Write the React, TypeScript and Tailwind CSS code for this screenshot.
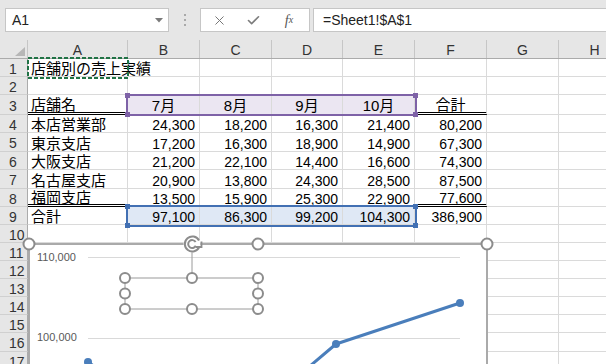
import { X, Check } from "lucide-react";

type Cell = { t?: string; a?: "l" | "r" | "c"; x?: string };
type Row = { n: number; h: string; cells: Cell[] };

const colW = ["w-[100px]", "w-[72px]", "w-[72px]", "w-[71px]", "w-[72px]", "w-[72px]", "w-[72px]", "w-[72px]"];
const letters = ["A", "B", "C", "D", "E", "F", "G", "H"];

const DBL = "border-b-[3px] border-double border-b-black";
const PUR = "bg-[#ebe6f2]";
const BLU = "bg-[#dfe8f5]";

const nums = (name: string, v: string[], last = false): Cell[] => [
  { t: name, x: last ? DBL : "" },
  ...v.slice(0, 4).map((t) => ({ t, a: "r" as const })),
  { t: v[4], a: "r", x: last ? DBL : "" },
];

const rows: Row[] = [
  { n: 1, h: "h-[18px]", cells: [{ t: "店舗別の売上実績", x: "border-r-transparent" }] },
  { n: 2, h: "h-[18px]", cells: [] },
  {
    n: 3,
    h: "h-[20px]",
    cells: [
      { t: "店舗名", x: DBL },
      { t: "7月", a: "c", x: PUR },
      { t: "8月", a: "c", x: PUR },
      { t: "9月", a: "c", x: PUR },
      { t: "10月", a: "c", x: PUR },
      { t: "合計", a: "c", x: DBL },
    ],
  },
  { n: 4, h: "h-[18px]", cells: nums("本店営業部", ["24,300", "18,200", "16,300", "21,400", "80,200"]) },
  { n: 5, h: "h-[19px]", cells: nums("東京支店", ["17,200", "16,300", "18,900", "14,900", "67,300"]) },
  { n: 6, h: "h-[18px]", cells: nums("大阪支店", ["21,200", "22,100", "14,400", "16,600", "74,300"]) },
  { n: 7, h: "h-[19px]", cells: nums("名古屋支店", ["20,900", "13,800", "24,300", "28,500", "87,500"]) },
  { n: 8, h: "h-[18px]", cells: nums("福岡支店", ["13,500", "15,900", "25,300", "22,900", "77,600"], true) },
  {
    n: 9,
    h: "h-[18px]",
    cells: [
      { t: "合計" },
      { t: "97,100", a: "r", x: BLU },
      { t: "86,300", a: "r", x: BLU },
      { t: "99,200", a: "r", x: BLU },
      { t: "104,300", a: "r", x: BLU },
      { t: "386,900", a: "r" },
    ],
  },
  { n: 10, h: "h-[18px]", cells: [] },
  { n: 11, h: "h-[18px]", cells: [] },
  { n: 12, h: "h-[18px]", cells: [] },
  { n: 13, h: "h-[18px]", cells: [] },
  { n: 14, h: "h-[18px]", cells: [] },
  { n: 15, h: "h-[18px]", cells: [] },
  { n: 16, h: "h-[19px]", cells: [] },
  { n: 17, h: "h-[18px]", cells: [] },
];

function Handles({ color }: { color: string }) {
  return (
    <>
      <span className={`absolute -left-[3px] -top-[3px] h-[5px] w-[5px] ${color}`} />
      <span className={`absolute -right-[3px] -top-[3px] h-[5px] w-[5px] ${color}`} />
      <span className={`absolute -bottom-[3px] -left-[3px] h-[5px] w-[5px] ${color}`} />
      <span className={`absolute -bottom-[3px] -right-[3px] h-[5px] w-[5px] ${color}`} />
    </>
  );
}

function Chart() {
  const hs: [number, number][] = [
    [97, 35], [164, 35], [230, 35],
    [97, 50.5], [230, 50.5],
    [97, 66], [164, 66], [230, 66],
  ];
  return (
    <div className="absolute left-[28px] top-[243px] h-[130px] w-[460px] bg-white">
      <span className="absolute left-[9px] top-[8px] text-[11px] leading-[13px] text-[#595959]">110,000</span>
      <span className="absolute left-[9px] top-[88px] text-[11px] leading-[13px] text-[#595959]">100,000</span>
      <svg className="absolute left-0 top-0 overflow-visible" width="460" height="130" viewBox="0 0 460 130">
        <line x1="60" y1="14.5" x2="432" y2="14.5" stroke="#d9d9d9" strokeWidth="1" />
        <line x1="60" y1="95.5" x2="432" y2="95.5" stroke="#d9d9d9" strokeWidth="1" />
        <polyline points="60,119 184,206 308,101 432,60" fill="none" stroke="#4a7ebb" strokeWidth="3" strokeLinejoin="round" />
        {[[60, 119], [308, 101], [432, 60]].map(([x, y]) => (
          <circle key={x} cx={x} cy={y} r="4" fill="#4a7ebb" />
        ))}
        {/* chart frame */}
        <path d="M1 130 V1 H459 V130" fill="none" stroke="#8f8f8f" strokeWidth="1.5" />
        {/* title box */}
        <rect x="97" y="35" width="133" height="31" fill="none" stroke="#9a9a9a" strokeWidth="1" />
        <line x1="164" y1="9" x2="164" y2="35" stroke="#9a9a9a" strokeWidth="1" />
        {hs.map(([x, y]) => (
          <circle key={`${x}-${y}`} cx={x} cy={y} r="5" fill="white" stroke="#8c8c8c" strokeWidth="2" />
        ))}
        {[1, 230, 459].map((x) => (
          <circle key={x} cx={x} cy="1" r="5.5" fill="white" stroke="#8c8c8c" strokeWidth="2" />
        ))}
        {/* rotate handle */}
        <g transform="translate(164,1)" fill="none" stroke="#8c8c8c" strokeWidth="2">
          <circle r="8.5" fill="white" stroke="none" />
          <path d="M7 -3.5 A7.5 7.5 0 1 0 7.2 3" />
          <path d="M3.6 -2 A4 4 0 1 0 3.8 1.8" />
          <path d="M4 3 H9.5 V-2.5" strokeWidth="1.8" />
        </g>
      </svg>
    </div>
  );
}

export default function App() {
  return (
    <div className="relative h-[364px] w-[606px] overflow-hidden bg-white font-['Liberation_Sans','Noto_Sans_CJK_JP',sans-serif] text-black">
      {/* formula bar */}
      <div className="flex h-[40px] bg-[#e6e6e6] pl-[5px] pt-[8px]">
        <div className="flex h-[24px] w-[164px] shrink-0 items-center justify-between border border-[#c6c6c6] bg-white pl-[6px] pr-[5px] text-[14px] text-[#222]">
          <span>A1</span>
          <svg width="8" height="5" viewBox="0 0 8 5">
            <path d="M0 0 H8 L4 4.5 Z" fill="#7a7a7a" />
          </svg>
        </div>
        <div className="flex h-[24px] w-[31px] shrink-0 flex-col items-center justify-center gap-[3px]">
          <span className="h-[2px] w-[2px] bg-[#a9a9a9]" />
          <span className="h-[2px] w-[2px] bg-[#a9a9a9]" />
          <span className="h-[2px] w-[2px] bg-[#a9a9a9]" />
        </div>
        <div className="flex h-[24px] w-[110px] shrink-0 items-center border border-[#c6c6c6] bg-white">
          <span className="flex w-[37px] justify-center">
            <X size={15} strokeWidth={1.6} color="#777" />
          </span>
          <span className="flex w-[31px] justify-center">
            <Check size={15} strokeWidth={2.6} color="#7d7d7d" />
          </span>
          <span className="flex w-[40px] justify-center font-['Liberation_Serif'] text-[14px] italic text-[#555]">
            f<span className="text-[10px] leading-[20px]">x</span>
          </span>
        </div>
        <div className="ml-[3px] flex h-[24px] flex-1 items-center border border-r-0 border-[#c6c6c6] bg-white pl-[9px] text-[14px] text-[#222]">
          =Sheet1!$A$1
        </div>
      </div>

      {/* column headers */}
      <div className="flex h-[19px] border-b border-[#ababab] bg-[#e6e6e6]">
        <div className="relative w-[28px] shrink-0 border-r border-[#c6c6c6]">
          <svg className="absolute left-[15px] top-[7px]" width="10" height="9" viewBox="0 0 10 9">
            <path d="M10 0 V9 H0 Z" fill="#b7b7b7" />
          </svg>
        </div>
        {letters.map((l, i) => (
          <div
            key={l}
            className={`flex shrink-0 items-center justify-center border-r border-[#c6c6c6] pt-[3px] text-[14px] text-[#333] ${colW[i]}`}
          >
            {l}
          </div>
        ))}
      </div>

      {/* rows */}
      {rows.map((r) => (
        <div key={r.n} className={`flex ${r.h}`}>
          <div className="flex w-[28px] shrink-0 items-center border-b border-r border-b-[#d0d0d0] border-r-[#ababab] bg-[#e6e6e6] pl-[9px] pt-[3px] text-[14px] text-[#333]">
            {r.n}
          </div>
          {colW.map((w, i) => {
            const c = r.cells[i] ?? {};
            const al = c.a === "r" ? "justify-end pr-[4px]" : c.a === "c" ? "justify-center" : "pl-[3px]";
            const sz = c.t && /[0-9,]+$/.test(c.t) && !/月/.test(c.t) ? "text-[14px]" : "text-[15px]";
            return (
              <div
                key={i}
                className={`flex shrink-0 items-center whitespace-nowrap border-b border-r border-[#dadada] pt-[4px] ${w} ${al} ${sz} ${c.x ?? ""}`}
              >
                {c.t}
              </div>
            );
          })}
        </div>
      ))}

      {/* copy marquee around A1 */}
      <svg className="absolute left-[27px] top-[57px]" width="102" height="22" viewBox="0 0 102 22">
        <rect x="1" y="1" width="100" height="20" fill="none" stroke="#217346" strokeWidth="2" strokeDasharray="4 2" />
      </svg>

      {/* chart source ranges */}
      <div className="absolute left-[126px] top-[94px] h-[22px] w-[291px] border-2 border-[#7e62a7]">
        <Handles color="bg-[#7e62a7]" />
      </div>
      <div className="absolute left-[126px] top-[205px] h-[22px] w-[291px] border-2 border-[#4270b3]">
        <Handles color="bg-[#4270b3]" />
      </div>

      <Chart />
    </div>
  );
}
